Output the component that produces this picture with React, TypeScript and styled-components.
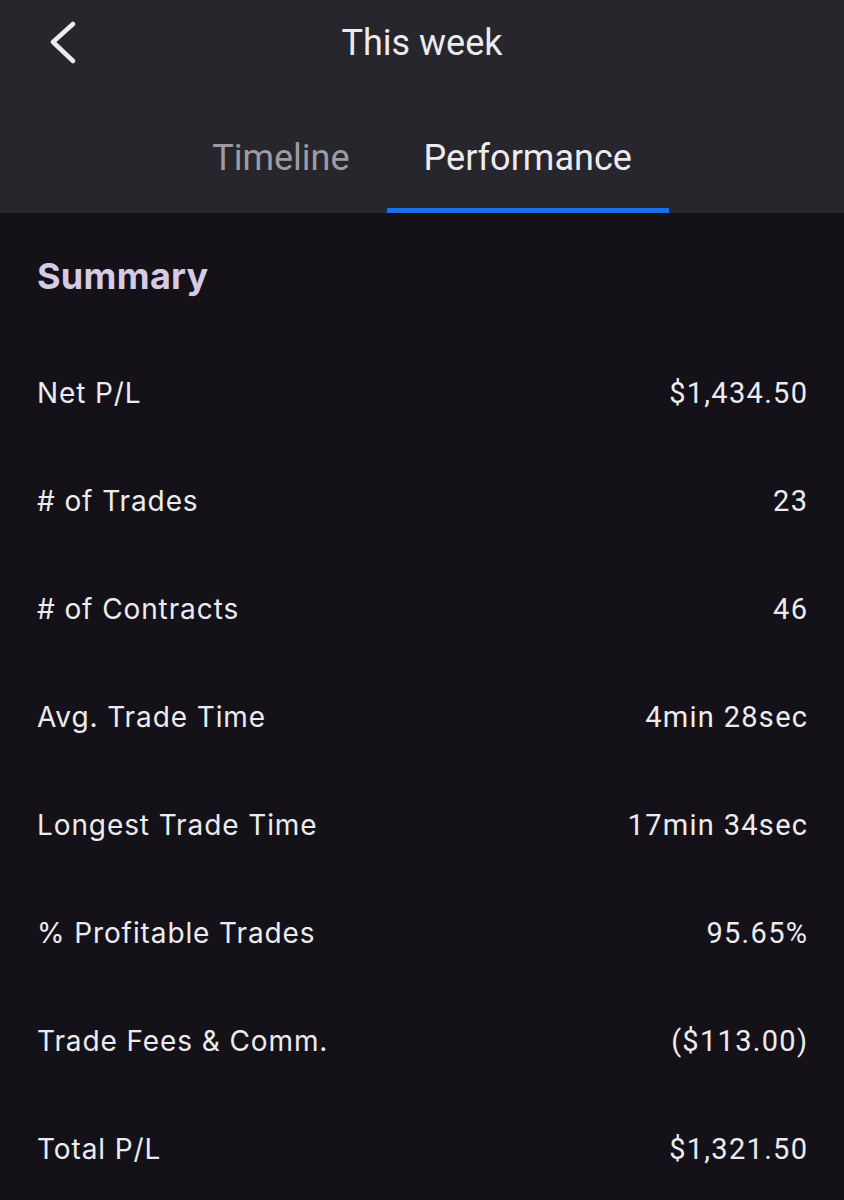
import React from 'react';
import styled, { createGlobalStyle } from 'styled-components';

const GlobalStyle = createGlobalStyle`
  html, body {
    margin: 0;
    padding: 0;
    background: #141218;
  }
  * {
    box-sizing: border-box;
  }
`;

const SPage = styled.div`
  width: 844px;
  min-height: 1200px;
  background: #141218;
  color: #ececf0;
  font-family: Inter, 'Liberation Sans', sans-serif;
`;

const SHeader = styled.header`
  background: #27262d;
  display: flex;
  flex-direction: column;
`;

const STopBar = styled.div`
  height: 86px;
  display: flex;
  align-items: center;
  justify-content: center;
  position: relative;
`;

const SBack = styled.button`
  position: absolute;
  left: 40px;
  top: 14px;
  width: 50px;
  height: 58px;
  background: none;
  border: none;
  padding: 0;
  display: flex;
  align-items: center;
  justify-content: center;
  cursor: pointer;
`;

const STitle = styled.h1`
  margin: 0;
  font-family: Roboto, 'Liberation Sans', sans-serif;
  font-weight: 400;
  font-size: 36px;
  color: #ececf0;
`;

const STabs = styled.nav`
  height: 127px;
  display: flex;
  justify-content: center;
  align-items: flex-end;
`;

const STab = styled.div<{ $active?: boolean }>`
  padding: 0 37px 29px;
  border-bottom: 5px solid ${(p) => (p.$active ? '#1b6fe6' : 'transparent')};
  font-family: Roboto, 'Liberation Sans', sans-serif;
  font-size: 36px;
  color: ${(p) => (p.$active ? '#ececf0' : '#9d9ca2')};
  line-height: 42px;
`;

const SContent = styled.main`
  padding: 0 37px;
`;

const SSummary = styled.h2`
  margin: 0;
  height: 126px;
  display: flex;
  align-items: center;
  font-weight: 700;
  font-size: 36px;
  letter-spacing: 0.3px;
  color: #d6cbe6;
`;

const SRow = styled.div`
  height: 108px;
  display: flex;
  align-items: center;
  justify-content: space-between;
`;

const SLabel = styled.span`
  font-size: 28px;
  letter-spacing: 0.9px;
  color: #ececf0;
`;

const SValue = styled.span`
  font-family: Roboto, 'Liberation Sans', sans-serif;
  font-size: 29px;
  letter-spacing: 1.3px;
  margin-right: -1.3px;
  color: #ececf0;
`;

const rows: [string, string][] = [
  ['Net P/L', '$1,434.50'],
  ['# of Trades', '23'],
  ['# of Contracts', '46'],
  ['Avg. Trade Time', '4min 28sec'],
  ['Longest Trade Time', '17min 34sec'],
  ['% Profitable Trades', '95.65%'],
  ['Trade Fees & Comm.', '($113.00)'],
  ['Total P/L', '$1,321.50'],
];

const App: React.FC = () => (
  <SPage>
    <GlobalStyle />
    <SHeader>
      <STopBar>
        <SBack aria-label="Back">
          <svg width="30" height="44" viewBox="0 0 30 44">
            <path
              d="M23 3 L3 21 L23 40"
              fill="none"
              stroke="#ececf0"
              strokeWidth="4.5"
              strokeLinecap="round"
              strokeLinejoin="round"
            />
          </svg>
        </SBack>
        <STitle>This week</STitle>
      </STopBar>
      <STabs>
        <STab>Timeline</STab>
        <STab $active>Performance</STab>
      </STabs>
    </SHeader>
    <SContent>
      <SSummary>Summary</SSummary>
      {rows.map(([label, value]) => (
        <SRow key={label}>
          <SLabel>{label}</SLabel>
          <SValue>{value}</SValue>
        </SRow>
      ))}
    </SContent>
  </SPage>
);

export default App;
